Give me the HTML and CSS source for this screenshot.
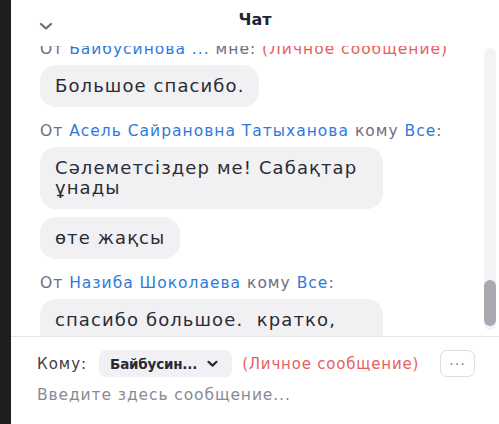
FILE: index.html
```html
<!DOCTYPE html>
<html lang="ru">
<head>
    <meta charset="UTF-8">
    <title>Чат</title>
    <link rel="stylesheet" href="styles.css">
</head>
<body>
	<div class="side"></div>
	<div class="chat">
		<div class="head">
			<span class="collapse">
				<svg width="14" height="9" viewBox="0 0 14 9"><path d="M2 2 L7 6.5 L12 2" fill="none" stroke="#6b6b78" stroke-width="2.2" stroke-linecap="round" stroke-linejoin="round"/></svg>
			</span>
			<span class="title">Чат</span>
		</div>
		<div class="msgs">
			<div class="list">
				<div class="from">От <span class="name">Байбусинова ...</span> мне: <span class="priv">(Личное сообщение)</span></div>
				<div class="bubble">Большое спасибо.</div>

				<div class="from">От <span class="name">Асель Сайрановна Татыханова</span> кому <span class="name">Все</span>:</div>
				<div class="bubble">Сәлеметсіздер ме! Сабақтар ұнады</div>
				<div class="bubble">өте жақсы</div>

				<div class="from">От <span class="name">Назиба Шоколаева</span> кому <span class="name">Все</span>:</div>
				<div class="bubble">спасибо большое.&nbsp; кратко, понятно</div>
			</div>
			<div class="track"><div class="thumb"></div></div>
		</div>
		<div class="foot">
			<div class="to">
				<span class="label">Кому:</span>
				<span class="pick">Байбусин...
					<svg width="11" height="8" viewBox="0 0 11 8"><path d="M1.5 1.8 L5.5 5.6 L9.5 1.8" fill="none" stroke="#2a2a33" stroke-width="2.2" stroke-linecap="round" stroke-linejoin="round"/></svg>
				</span>
				<span class="priv">(Личное сообщение)</span>
				<span class="more">···</span>
			</div>
			<div class="input">Введите здесь сообщение...</div>
		</div>
	</div>
</body>
</html>
```

FILE: styles.css
```css
*{
	padding: 0px;
	margin: 0px;
	box-sizing: border-box;
}
body{
	display: flex;
	height: 424px;
	overflow: hidden;
	font-family: "DejaVu Sans", "Open Sans", sans-serif;
	background: #ffffff;
}
.side{
	width: 11px;
	background-color: #1e1e20;
}
.chat{
	flex: 1;
	display: flex;
	flex-direction: column;
}
.head{
	height: 46px;
	padding-top: 10px;
	display: flex;
	justify-content: center;
	position: relative;
}
.collapse{
	position: absolute;
	left: 28px;
	top: 16px;
}
.title{
	font-size: 16px;
	line-height: 20px;
	font-weight: 700;
	color: #232333;
}
.msgs{
	height: 290px;
	position: relative;
	overflow: hidden;
}
.list{
	margin-top: -13px;
	padding-left: 29px;
	display: flex;
	flex-direction: column;
	align-items: flex-start;
}
.from{
	font-size: 15.5px;
	letter-spacing: 1px;
	color: #6e6e7e;
	line-height: 20px;
	margin: 6px 0 6px 0;
	white-space: nowrap;
}
.name{
	color: #2f7ad8;
}
.priv{
	color: #e5605f;
}
.bubble{
	background-color: #f1f1f4;
	border-radius: 16px;
	padding: 11px 15px 11px 15px;
	max-width: 343px;
	font-size: 18px;
	letter-spacing: 1.1px;
	line-height: 20px;
	color: #2b2b33;
	margin-bottom: 8px;
}
.track{
	position: absolute;
	right: 3px;
	top: 2px;
	width: 12px;
	height: 282px;
	border-radius: 6px;
	background-color: #f3f3f6;
}
.thumb{
	margin-top: 232px;
	height: 46px;
	border-radius: 6px;
	background-color: #a9a9b2;
}
.foot{
	border-top: 1px solid #e4e4ea;
	padding: 13px 0 0 26px;
}
.to{
	display: flex;
	align-items: center;
	height: 27px;
	font-size: 15px;
}
.label{
	color: #3c3c48;
	letter-spacing: 1px;
	margin-right: 12px;
}
.pick{
	display: flex;
	align-items: center;
	gap: 10px;
	height: 27px;
	padding: 0 14px 0 11px;
	background-color: #f0f0f5;
	border-radius: 7px;
	font-weight: 700;
	font-size: 13.5px;
	letter-spacing: -0.2px;
	color: #2a2a33;
	margin-right: 10px;
}
.to .priv{
	letter-spacing: 0.8px;
}
.more{
	margin-left: auto;
	margin-right: 24px;
	width: 35px;
	height: 27px;
	border: 1px solid #dcdce2;
	border-radius: 7px;
	display: flex;
	align-items: center;
	justify-content: center;
	color: #7a7a86;
	font-size: 14px;
	letter-spacing: 1px;
}
.input{
	margin-top: 9px;
	font-size: 15.5px;
	letter-spacing: 0.9px;
	color: #8a8a96;
}
```
